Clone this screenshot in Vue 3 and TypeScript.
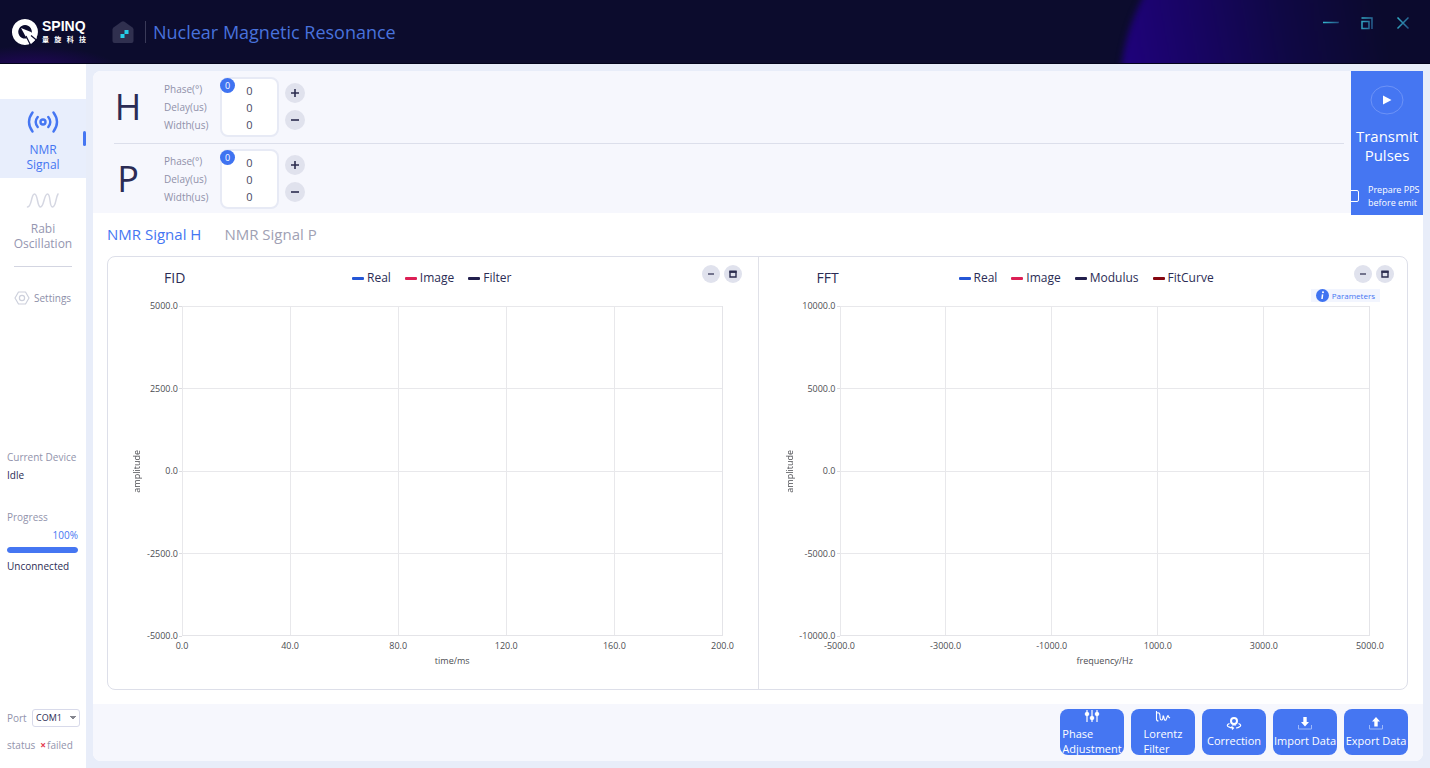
<script setup lang="ts">
import { ref } from 'vue'

interface Pulse {
  name: string
  values: { label: string; value: number }[]
}
interface Chart {
  id: string
  title: string
  legend: { name: string; color: string }[]
  yLabels: string[]
  xLabels: string[]
  xTitle: string
  parameters: boolean
}

const makeValues = () => [
  { label: 'Phase(°)', value: 0 },
  { label: 'Delay(us)', value: 0 },
  { label: 'Width(us)', value: 0 },
]
const pulses = ref<Pulse[]>([
  { name: 'H', values: makeValues() },
  { name: 'P', values: makeValues() },
])

const tabs = ['NMR Signal H', 'NMR Signal P']
const activeTab = ref(0)
const port = ref('COM1')
const preparePps = ref(false)
const progress = ref(100)

const charts: Chart[] = [
  {
    id: 'fid',
    title: 'FID',
    legend: [
      { name: 'Real', color: '#2456d6' },
      { name: 'Image', color: '#dc1f55' },
      { name: 'Filter', color: '#221f4d' },
    ],
    yLabels: ['5000.0', '2500.0', '0.0', '-2500.0', '-5000.0'],
    xLabels: ['0.0', '40.0', '80.0', '120.0', '160.0', '200.0'],
    xTitle: 'time/ms',
    parameters: false,
  },
  {
    id: 'fft',
    title: 'FFT',
    legend: [
      { name: 'Real', color: '#2456d6' },
      { name: 'Image', color: '#dc1f55' },
      { name: 'Modulus', color: '#221f4d' },
      { name: 'FitCurve', color: '#85060f' },
    ],
    yLabels: ['10000.0', '5000.0', '0.0', '-5000.0', '-10000.0'],
    xLabels: ['-5000.0', '-3000.0', '-1000.0', '1000.0', '3000.0', '5000.0'],
    xTitle: 'frequency/Hz',
    parameters: true,
  },
]
</script>

<template>
  <div class="app">
    <header class="topbar">
      <div class="logo">
        <svg width="28" height="28" viewBox="0 0 28 28" aria-hidden="true">
          <path fill="#fff" fill-rule="evenodd" d="M14 1a13 13 0 1 1-.1 0zM14 7a6.800 6.800 0 1 0 .1 0z" />
          <path fill="#fff" d="M10 10l10 4 6 6-6 6-4-5z" />
          <path d="M15 18l4.500 9M20 17.500l6 5" stroke="#0c0c2d" stroke-width="1.200" fill="none" />
        </svg>
        <div class="logo-text">
          <strong>SPINQ</strong>
          <div class="logo-cn"><span>量</span><span>旋</span><span>科</span><span>技</span></div>
        </div>
      </div>
      <button class="home" aria-label="Home">
        <svg width="22" height="22" viewBox="0 0 22 22">
          <path fill="#30304f" d="M9.500.8q1.500-1 3 0l8 5.700q1 .8 1 2V20q0 2-2 2h-17q-2 0-2-2V8.500q0-1.200 1-2z" />
          <path fill="#25cfe9" d="M12.500 9h4v4h-4zM8.500 13h4v4h-4z" />
        </svg>
      </button>
      <h1>Nuclear Magnetic Resonance</h1>
      <div class="window-buttons">
        <button aria-label="Minimize">
          <svg width="16" height="16" viewBox="0 0 16 16">
            <defs>
              <linearGradient id="ice" gradientUnits="userSpaceOnUse" x1="1" y1="0" x2="16" y2="4">
                <stop offset="0" stop-color="#35c0d5" />
                <stop offset="1" stop-color="#245486" />
              </linearGradient>
            </defs>
            <path d="M0 7.500h15.500v.1" stroke="url(#ice)" stroke-width="1.500" fill="none" />
          </svg>
        </button>
        <button aria-label="Restore">
          <svg width="16" height="16" viewBox="0 0 16 16" fill="none" stroke="url(#ice)">
            <path d="M3 6.500h7v7H3zM2.500 3H13v11" stroke-width="1.500" />
          </svg>
        </button>
        <button aria-label="Close">
          <svg width="16" height="16" viewBox="0 0 16 16" fill="none" stroke="url(#ice)">
            <path d="M2.500 2.500l11 11M13.500 2.500l-11 11" stroke-width="1.500" />
          </svg>
        </button>
      </div>
    </header>

    <div class="body">
      <aside class="sidebar">
        <nav>
          <a class="nav-item active" href="#nmr">
            <svg width="32" height="24" viewBox="0 0 32 24" fill="none" stroke="#4576f2" stroke-width="2.400" stroke-linecap="round">
              <circle cx="16" cy="12" r="2.500" />
              <path d="M10.700 7q-4 5 0 10M21.300 7q4 5 0 10M5.500 2.500q-7 9.500 0 19M26.500 2.500q7 9.500 0 19" />
            </svg>
            <span>NMR<br />Signal</span>
          </a>
          <a class="nav-item" href="#rabi">
            <svg width="34" height="24" viewBox="0 0 34 24" fill="none" stroke="#d5d7e2" stroke-width="1.500" stroke-linecap="round">
              <path d="M1.500 18C6 18 5 5 8.500 5S11 18 14.500 18 18 5 21.500 5 23 18 26.500 18 29.500 9 32 5" />
            </svg>
            <span>Rabi<br />Oscillation</span>
          </a>
        </nav>
        <hr />
        <button class="settings">
          <svg width="16" height="16" viewBox="0 0 16 16" fill="none" stroke="#cdd0dc" stroke-width="1.200">
            <path d="M4.500 2h7L15 8l-3.500 6h-7L1 8z" stroke-linejoin="round" />
            <circle cx="8" cy="8" r="2.600" />
          </svg>
          Settings
        </button>
        <section class="device">
          <span class="muted">Current Device</span>
          <span>Idle</span>
          <span class="muted progress-title">Progress</span>
          <span class="percent">{{ progress }}%</span>
          <div class="bar"><div :style="{ width: progress + '%' }"></div></div>
          <span>Unconnected</span>
        </section>
        <section class="port">
          <div class="port-row">
            <label for="port">Port</label>
            <select id="port" v-model="port"><option>COM1</option></select>
          </div>
          <div class="status"><span>status</span><b>×</b><span>failed</span></div>
        </section>
      </aside>

      <main>
        <section class="pulses">
          <div class="pulse-rows">
            <div v-for="p in pulses" :key="p.name" class="pulse">
              <span class="nucleus">{{ p.name }}</span>
              <div class="labels">
                <label v-for="(v, i) in p.values" :key="v.label" :for="p.name + i">{{ v.label }}</label>
              </div>
              <div class="values">
                <input v-for="(v, i) in p.values" :id="p.name + i" :key="v.label" v-model="v.value" type="text" />
                <span class="badge">0</span>
              </div>
              <div class="steps">
                <button :aria-label="'Add pulse ' + p.name">
                  <svg width="8" height="8" viewBox="0 0 8 8"><path d="M4 0v8M0 4h8" stroke="#2b2c4e" stroke-width="1.600" /></svg>
                </button>
                <button :aria-label="'Remove pulse ' + p.name">
                  <svg width="8" height="8" viewBox="0 0 8 8"><path d="M0 4h8" stroke="#2b2c4e" stroke-width="1.600" /></svg>
                </button>
              </div>
            </div>
          </div>
          <div class="transmit">
            <button>
              <svg width="34" height="30" viewBox="0 0 34 30">
                <ellipse cx="17" cy="15" rx="16" ry="14" fill="none" stroke="#6d93f7" />
                <path d="M13 10.500v9l8.500-4.500z" fill="#fff" />
              </svg>
              <span>Transmit<br />Pulses</span>
            </button>
            <label><input v-model="preparePps" type="checkbox" /><span>Prepare PPS<br />before emit</span></label>
          </div>
        </section>

        <div class="tabs" role="tablist">
          <button
            v-for="(t, i) in tabs"
            :key="t"
            role="tab"
            :aria-selected="activeTab === i"
            :class="{ on: activeTab === i }"
            @click="activeTab = i"
          >{{ t }}</button>
        </div>

        <section class="charts">
          <article v-for="c in charts" :key="c.id" :class="['chart', c.id]">
            <div class="chart-head">
              <h2>{{ c.title }}</h2>
              <ul>
                <li v-for="l in c.legend" :key="l.name"><i :style="{ background: l.color }"></i>{{ l.name }}</li>
              </ul>
              <div class="chart-tools">
                <button :aria-label="'Minimize ' + c.title">
                  <svg width="8" height="8" viewBox="0 0 8 8"><path d="M1 4h6" stroke="#2b2c4e" stroke-width="1.200" /></svg>
                </button>
                <button :aria-label="'Maximize ' + c.title">
                  <svg width="8" height="8" viewBox="0 0 8 8"><path d="M1 2v5h6V2z" fill="none" stroke="#2b2c4e" stroke-width="1.400" /><path d="M.3 1.600h7.400" stroke="#2b2c4e" stroke-width="2.200" /></svg>
                </button>
              </div>
            </div>
            <div class="params-row">
              <button v-if="c.parameters" class="params">
                <svg width="13" height="13" viewBox="0 0 13 13">
                  <circle cx="6.500" cy="6.500" r="6.500" fill="#3f73f1" />
                  <path d="M6.600 5.300L6 10" stroke="#fff" stroke-width="1.500" /><circle cx="7" cy="3.300" r="1" fill="#fff" />
                </svg>
                Parameters
              </button>
            </div>
            <div class="plot-area">
              <div class="y-title"><span>amplitude</span></div>
              <div class="y-labels"><span v-for="y in c.yLabels" :key="y">{{ y }}</span></div>
              <div class="plot"><div v-for="n in 20" :key="n"></div></div>
              <div class="x-labels"><span v-for="x in c.xLabels" :key="x">{{ x }}</span></div>
              <div class="x-title">{{ c.xTitle }}</div>
            </div>
          </article>
        </section>

        <footer>
          <button>
            <svg width="16" height="14" viewBox="0 0 16 14" stroke="#fff" fill="#fff">
              <path d="M3 1v12M8 1v12M13 1v12" stroke-width="1.200" />
              <circle cx="3" cy="5" r="1.800" /><circle cx="8" cy="9" r="1.800" /><circle cx="13" cy="5" r="1.800" />
            </svg>
            <span>Phase<br />Adjustment</span>
          </button>
          <button>
            <svg width="16" height="14" viewBox="0 0 16 14" stroke="#fff" fill="none" stroke-width="1.100">
              <path d="M1.500 2v8q0 2 2 2M2 4q3-1 3 3 0 4 1.500 4T8 7q.5-1 1 2t2 2l1.500-4q.7-1 1 1l1.500 1" />
            </svg>
            <span>Lorentz<br />Filter</span>
          </button>
          <button>
            <svg width="16" height="14" viewBox="0 0 16 14" stroke="#fff" fill="none">
              <circle cx="8" cy="5" r="3" stroke-width="2" />
              <path d="M3.500 7.500Q0 9 2 10.500q2.500 1.500 5 1.500M12.500 7.500Q16 9 14 10.500q-2 1.500-4 1.500M5.500 10.500L7.500 12l-1.500 1.500M6 9h4" stroke-width="1.100" />
            </svg>
            <span>Correction</span>
          </button>
          <button>
            <svg width="16" height="14" viewBox="0 0 16 14">
              <path d="M1.500 9v4h13V9" stroke="#9db8fb" fill="none" />
              <path d="M6.300 1h3.400v5H12L8 10.500 4 6h2.300z" fill="#fff" />
            </svg>
            <span>Import Data</span>
          </button>
          <button>
            <svg width="16" height="14" viewBox="0 0 16 14">
              <path d="M1.500 9v4h13V9" stroke="#9db8fb" fill="none" />
              <path d="M6.300 10.500h3.400v-5H12L8 1 4 5.500h2.300z" fill="#fff" />
            </svg>
            <span>Export Data</span>
          </button>
        </footer>
      </main>
    </div>
  </div>
</template>

<style>
html, body { margin: 0; background: #e8edf9; }
</style>

<style scoped>
.app, .app * { box-sizing: border-box; }
.app {
  min-height: 100vh;
  display: flex;
  flex-direction: column;
  font-family: 'Open Sans', 'Noto Sans', 'Noto Sans CJK SC', sans-serif;
  font-size: 10px;
  color: #2b2c55;
  background: #e8edf9;
}
button, input, select { font: inherit; color: inherit; margin: 0; padding: 0; border: 0; background: none; }
button { cursor: pointer; }
svg { display: block; flex: none; }

.topbar {
  position: relative;
  overflow: hidden;
  display: flex;
  align-items: center;
  height: 64px;
  padding: 0 19px 0 11px;
  border-bottom: 1px solid #03031c;
  background: radial-gradient(90px 24px at 30px 70px, #240560, transparent), #0c0c2d;
}
.topbar::after {
  content: '';
  position: absolute;
  right: -90px;
  top: -110px;
  width: 400px;
  height: 400px;
  border-radius: 50%;
  filter: blur(3px);
  background: linear-gradient(80deg, #24008a, #190468 22%, #0f0844 45%, #0b0a2d 66%);
}
.topbar > * { position: relative; z-index: 1; }
.logo { display: flex; align-items: center; gap: 3px; width: 101px; color: #fff; }
.logo-text { width: 44px; }
.logo strong { display: block; font-family: 'Liberation Sans', Arial, sans-serif; font-size: 14px; line-height: 14px; font-weight: 700; }
.logo-cn {
  display: flex;
  justify-content: space-between;
  margin-top: 1px;
  font-family: 'Noto Sans CJK SC', sans-serif;
  font-size: 7px;
  line-height: 10px;
  font-weight: 700;
}
h1 {
  margin: 0 0 0 11px;
  padding-left: 7px;
  border-left: 1px solid #3a3a58;
  font-size: 18px;
  line-height: 22px;
  font-weight: 400;
  color: #4872dc;
}
.window-buttons { display: flex; gap: 20px; margin-left: auto; margin-bottom: 18px; }

.body { flex: 1; display: flex; }
.sidebar {
  width: 86px;
  flex: none;
  display: flex;
  flex-direction: column;
  padding: 35px 0 15px;
  background: #fff;
}
.nav-item {
  display: flex;
  flex-direction: column;
  align-items: center;
  gap: 8px;
  height: 79px;
  padding-top: 11px;
  font-size: 12px;
  line-height: 15px;
  text-align: center;
  text-decoration: none;
  color: #9596b0;
}
.nav-item.active { position: relative; color: #4576f2; background: #e8eefc; }
.nav-item.active::after {
  content: '';
  position: absolute;
  right: 0;
  top: 32px;
  width: 3px;
  height: 15px;
  border-radius: 2px;
  background: #4576f2;
}
hr { width: 58px; height: 1px; margin: 9px 14px 22px; border: 0; background: #d3d5e1; }
.settings { display: flex; align-items: center; gap: 4px; height: 18px; margin-left: 14px; color: #8d8fa9; }
.device { display: flex; flex-direction: column; margin-top: auto; padding: 7px 8px 0 7px; line-height: 18px; }
.muted, .port { color: #9293ac; }
.progress-title { margin-top: 24px; }
.percent { align-self: flex-end; color: #4576f2; }
.bar { height: 6px; margin: 3px 0 4px; border-radius: 3px; background: #dfe4f2; overflow: hidden; }
.bar div { height: 100%; border-radius: 3px; background: #4576f2; }
.port { margin-top: auto; padding: 0 6px 0 7px; line-height: 16px; }
.port-row { display: flex; align-items: center; justify-content: space-between; margin-bottom: 10px; }
.port select {
  width: 48px;
  height: 18px;
  padding-left: 3px;
  appearance: none;
  border: 1px solid #d8daea;
  border-radius: 3px;
  font-size: 9px;
  color: #2b2c55;
  background: linear-gradient(to bottom left, #85868f 50%, transparent 50%) no-repeat 36px 6px / 4px 4px,
    linear-gradient(to bottom right, #85868f 50%, transparent 50%) no-repeat 40px 6px / 4px 4px;
}
.status { display: flex; }
.status b { margin: 0 1px 0 5px; color: #e2394d; }

main { flex: 1; min-width: 0; display: flex; flex-direction: column; margin: 7px; border-radius: 8px; background: #fff; }
.pulses { display: flex; height: 142px; background: #f6f7fd; border-radius: 8px 0 0 0; }
.pulse-rows { flex: 1; padding: 0 7px 0 21px; }
.pulse { display: flex; align-items: flex-start; height: 72px; padding-top: 6px; }
.pulse + .pulse { padding-top: 5px; border-top: 1px solid #dcdfeb; }
.nucleus { width: 28px; text-align: center; font-size: 36px; line-height: 60px; }
.labels { width: 56px; margin: 3px 0 0 22px; color: #9091aa; }
.labels label { display: block; line-height: 18px; white-space: nowrap; }
.values {
  position: relative;
  width: 59px;
  height: 60px;
  padding-top: 3px;
  border: 2px solid #e7eaf5;
  border-radius: 8px;
  background: #fff;
}
.values input { display: block; width: 100%; height: 17px; line-height: 17px; font-size: 11px; text-align: center; color: #47485f; }
.badge {
  position: absolute;
  left: -2px;
  top: -1px;
  width: 15px;
  height: 15px;
  border-radius: 50%;
  font-size: 9px;
  line-height: 15px;
  text-align: center;
  color: #fff;
  background: #3f73f1;
}
.steps { display: flex; flex-direction: column; gap: 7px; margin: 6px 0 0 6px; }
.steps button, .chart-tools button {
  display: grid;
  place-items: center;
  width: 20px;
  height: 20px;
  border-radius: 50%;
  background: #e0e2ed;
}
.transmit { width: 72px; height: 144px; overflow: hidden; color: #fff; background: #4576f2; }
.transmit button {
  display: flex;
  flex-direction: column;
  align-items: center;
  justify-content: flex-start;
  gap: 12px;
  width: 100%;
  height: 112px;
  padding-top: 14px;
  font-size: 15px;
  line-height: 19px;
}
.transmit label { display: flex; align-items: center; gap: 9px; margin-left: -3px; font-size: 9px; line-height: 13px; white-space: nowrap; }
.transmit input { appearance: none; flex: none; width: 11px; height: 12px; border: 1px solid #fff; border-radius: 2px; }
.transmit input:checked { background: #fff; }

.tabs { display: flex; gap: 23px; padding: 10px 14px 11px; }
.tabs button { font-size: 15px; line-height: 22px; color: #a0a1b4; }
.tabs .on { color: #4576f2; }

.charts {
  flex: 1;
  display: grid;
  grid-template-columns: 1fr 1fr;
  margin: 0 15px 14px 14px;
  border: 1px solid #dddfe9;
  border-radius: 8px;
}
.chart { min-width: 0; display: flex; flex-direction: column; padding: 0 35px 20px 22px; }
.chart + .chart { padding: 0 37px 20px 24px; border-left: 1px solid #e0e1e8; }
.chart-head { display: flex; align-items: flex-start; height: 32px; margin-right: -19px; padding-top: 8px; }
.fft .chart-head { margin-right: -24px; }
h2 { width: 222px; margin: 2px 0 0; padding-left: 34px; font-size: 14px; line-height: 22px; font-weight: 400; }
.fft h2 { width: 176px; }
.chart-head ul { display: flex; gap: 14px; margin: 3px 0 0; padding: 0; list-style: none; font-size: 12px; line-height: 20px; }
.chart-head li { display: flex; align-items: center; gap: 3px; }
.chart-head i { width: 12px; height: 3px; border-radius: 1px; }
.chart-tools { display: flex; gap: 4px; margin-left: auto; }
.chart-tools button { width: 18px; height: 18px; }
.params-row { height: 17px; display: flex; justify-content: flex-end; margin-right: -10px; }
.params { display: flex; align-items: center; gap: 3px; height: 13px; padding: 0 5px; font-size: 8px; color: #4576f2; background: #f2f5fe; }
.plot-area {
  flex: 1;
  display: grid;
  grid-template: 'yt y plot' 1fr '. . x' 17px '. . t' 16px / 12px 40px 1fr;
  font-size: 9px;
  line-height: 14px;
  color: #4c4d52;
}
.fft .plot-area { grid-template-columns: 12px 45px 1fr; }
.y-title { grid-area: yt; display: grid; place-items: center; }
.y-title span { writing-mode: vertical-rl; transform: rotate(180deg); }
.y-labels { grid-area: y; display: flex; flex-direction: column; justify-content: space-between; margin: -7px 0; text-align: right; }
.y-labels span { display: flex; align-items: center; justify-content: flex-end; gap: 1px; white-space: nowrap; }
.y-labels span::after { content: ''; width: 3px; height: 1px; background: #dcdce0; }
.plot {
  grid-area: plot;
  display: grid;
  grid-template: repeat(4, 1fr) / repeat(5, 1fr);
  border: solid #e4e4e8;
  border-width: 0 1px 1px 0;
}
.plot div { border: solid #e8e8eb; border-width: 1px 0 0 1px; }
.x-labels { grid-area: x; display: flex; justify-content: space-between; padding-top: 3px; }
.x-labels span { display: flex; justify-content: center; width: 0; white-space: nowrap; }
.x-title { grid-area: t; padding-top: 1px; text-align: center; }

footer { display: flex; justify-content: flex-end; gap: 7px; padding: 5px 15px 6px; background: #f6f7fd; border-radius: 0 0 8px 8px; }
footer button {
  display: flex;
  flex-direction: column;
  align-items: center;
  justify-content: center;
  gap: 3px;
  width: 64px;
  height: 46px;
  border-radius: 8px;
  overflow: hidden;
  font-size: 11px;
  line-height: 15px;
  text-align: left;
  white-space: nowrap;
  color: #fff;
  background: #4576f2;
}
</style>
